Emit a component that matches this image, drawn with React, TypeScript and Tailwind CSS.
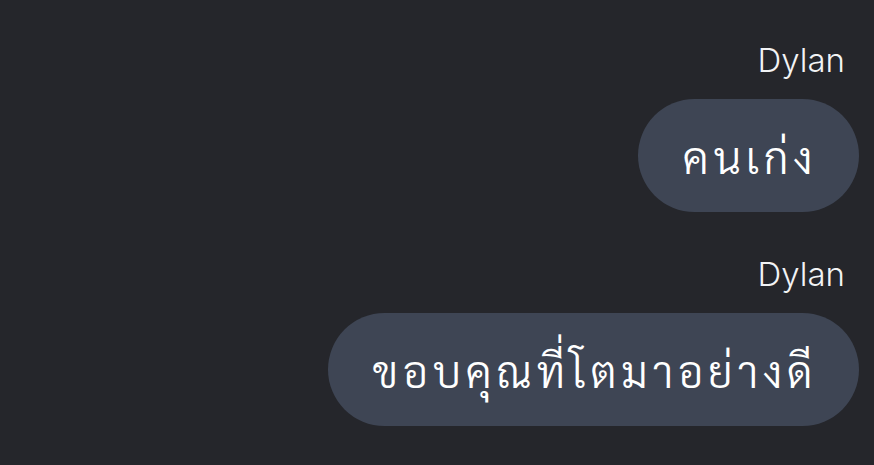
import React from 'react';

const messages = [
  { name: 'Dylan', text: 'คนเก่ง' },
  { name: 'Dylan', text: 'ขอบคุณที่โตมาอย่างดี' },
];

const App: React.FC = () => {
  return (
    <div className="min-h-[465px] w-full bg-[#25262b] pt-[40px] pr-[15px] flex flex-col items-end gap-[42px]">
      {messages.map((m, i) => (
        <div key={i} className="flex flex-col items-end gap-[19px]">
          <div className="mr-[14px] h-[40px] leading-[40px] text-[33px] font-light text-[#f2f3f5] font-['Inter',sans-serif]">
            {m.name}
          </div>
          <div className="h-[113px] flex items-center rounded-full bg-[#3e4554] pl-[45px] pr-[42px] text-[44px] font-light tracking-[4.5px] text-white font-['Thonburi','Sarabun','Noto_Sans_Thai_Looped','Loma','Garuda','Noto_Sans_Thai','Noto_Sans',sans-serif]">
            {m.text}
          </div>
        </div>
      ))}
    </div>
  );
};

export default App;
